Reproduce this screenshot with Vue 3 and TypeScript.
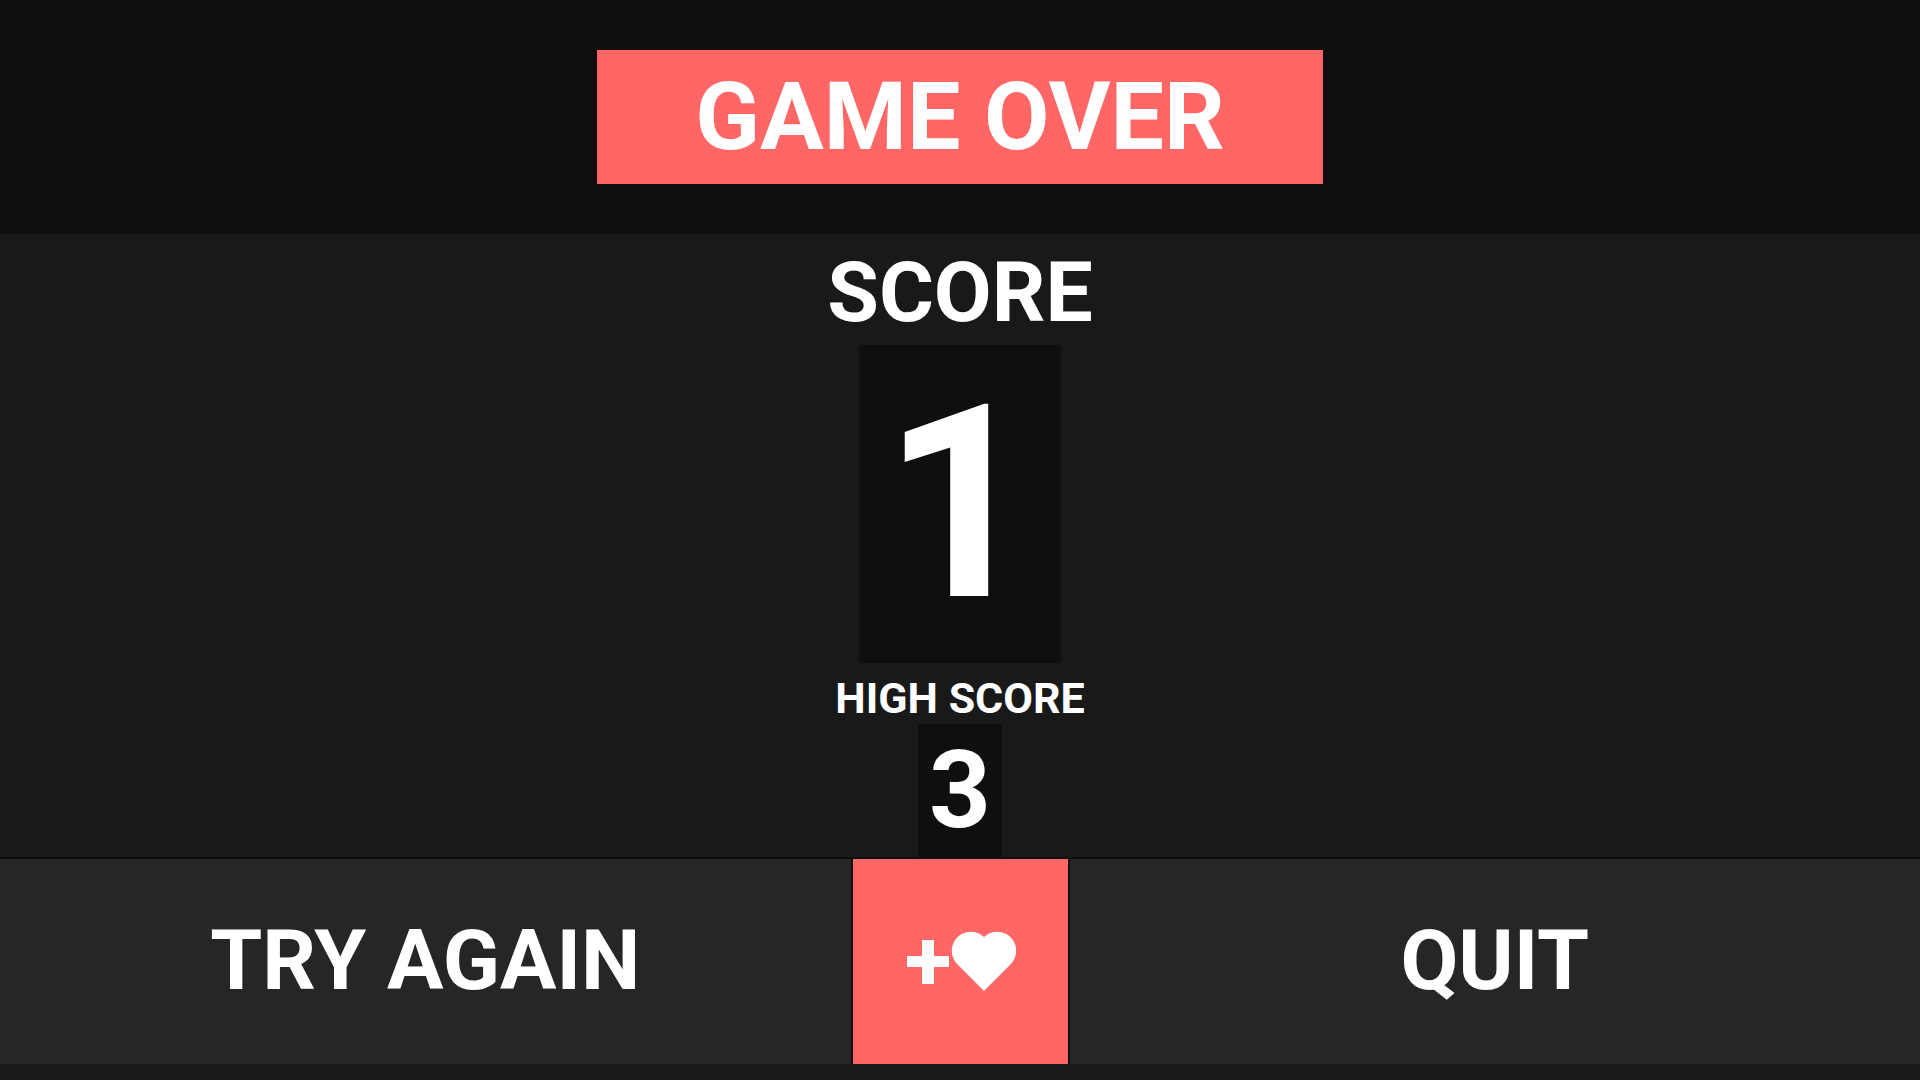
<script setup lang="ts">
const score: number = 1
const highScore: number = 3
</script>

<template>
  <main class="screen">
    <header class="top">
      <h1 class="banner">GAME OVER</h1>
    </header>
    <section class="scores">
      <h2 class="label">SCORE</h2>
      <p class="score">{{ score }}</p>
      <h3 class="high-label">HIGH SCORE</h3>
      <p class="high">{{ highScore }}</p>
    </section>
    <nav class="actions">
      <button class="action" type="button">TRY AGAIN</button>
      <button class="life" type="button" aria-label="Extra life">
        <svg width="112" height="61" viewBox="0 0 112 61" aria-hidden="true">
          <path d="M18 9h12v16h15v11H30v17H18V36H3V25h15z" fill="#fff" />
          <path d="M80 60L53.6 33.4A19 19 0 0 1 80 6A19 19 0 0 1 106.4 33.4z" fill="#fff" />
        </svg>
      </button>
      <button class="action" type="button">QUIT</button>
    </nav>
  </main>
</template>

<style>
body {
  margin: 0;
  background: #191919;
}
</style>

<style scoped>
.screen {
  display: flex;
  flex-direction: column;
  color: #fff;
  font-family: Roboto, sans-serif;
  font-weight: 700;
  text-align: center;
}
.top {
  display: flex;
  justify-content: center;
  padding: 50px 0;
  background: #0f0f0f;
}
h1, h2, h3, p {
  margin: 0;
  font-weight: 700;
}
.banner {
  padding: 0 98px;
  background: #f66;
  font-size: 95px;
  line-height: 134px;
}
.scores {
  display: flex;
  flex-direction: column;
  align-items: center;
}
.label {
  padding-top: 7px;
  font-size: 84px;
  line-height: 104px;
}
.score {
  padding: 0 24px;
  background: #0f0f0f;
  font-size: 270px;
  line-height: 318px;
}
.high-label {
  padding-top: 9px;
  font-size: 43px;
  line-height: 52px;
}
.high {
  padding: 0 11px;
  background: #0f0f0f;
  font-size: 108px;
  line-height: 133px;
}
.actions {
  display: flex;
  gap: 2px;
  padding-top: 2px;
  background: #0f0f0f;
}
button {
  height: 205px;
  margin: 0;
  padding: 0;
  border: 0;
  color: #fff;
  font: inherit;
  font-size: 84px;
  cursor: pointer;
}
.action {
  flex: 1;
  padding-bottom: 2px;
  background: #262626;
}
.life {
  display: flex;
  align-items: center;
  justify-content: center;
  width: 215px;
  background: #f66;
}
</style>
